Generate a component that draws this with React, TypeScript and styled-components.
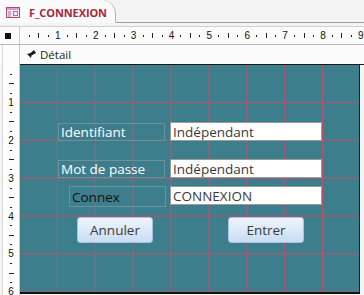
import React from 'react'
import styled, { createGlobalStyle } from 'styled-components';

const CM = 37.9;
const STEP = CM / 4;

const GlobalStyle = createGlobalStyle`
  html, body {
    margin: 0;
    padding: 0;
    background: #f4f4f4;
  }
  body {
    font-family: "Open Sans", "Noto Sans", sans-serif;
  }
`;

type Control = {
  kind: 'label' | 'text';
  text: string;
  left: number;
  top: number;
  width: number;
  height: number;
  dark?: boolean;
};

const controls: Control[] = [
  { kind: 'label', text: 'Identifiant', left: 38, top: 58, width: 107, height: 18 },
  { kind: 'text', text: 'Indépendant', left: 150, top: 57, width: 152, height: 19 },
  { kind: 'label', text: 'Mot de passe', left: 38, top: 95, width: 107, height: 18 },
  { kind: 'text', text: 'Indépendant', left: 150, top: 94, width: 152, height: 19 },
  { kind: 'label', text: 'Connex', left: 49, top: 121, width: 97, height: 21, dark: true },
  { kind: 'text', text: 'CONNEXION', left: 150, top: 121, width: 152, height: 19 },
];

const buttons = [
  { text: 'Annuler', left: 57, top: 152 },
  { text: 'Entrer', left: 208, top: 152 },
];

function tickFor(k: number, vertical: boolean) {
  if (k % 4 === 0) return <RulerNum>{k / 4}</RulerNum>;
  if (k % 4 === 2) return <Bar $vertical={vertical} />;
  return <Dot $vertical={vertical} />;
}

function FormIcon() {
  return (
    <svg width="14" height="11" viewBox="0 0 14 11">
      <rect x="0.5" y="0.5" width="13" height="10" fill="#f6e9f0" stroke="#b24a78" />
      <rect x="1" y="1" width="12" height="2" fill="#d9a0bb" />
      <line x1="2" y1="5" x2="5" y2="5" stroke="#9a7aa8" />
      <line x1="2" y1="7" x2="5" y2="7" stroke="#9a7aa8" />
      <line x1="2" y1="9" x2="5" y2="9" stroke="#9a7aa8" />
      <rect x="7.5" y="4.5" width="4" height="4" fill="none" stroke="#9a7aa8" />
    </svg>
  );
}

// section marker: a bold arrow leaning down-left
function SectionIcon() {
  return (
    <svg width="9" height="9" viewBox="0 0 9 9">
      <path d="M0 4 L4 8 L4.5 5.5 L9 3 L7 0 L3.5 3 Z" fill="#1c1c1c" />
    </svg>
  );
}

function App() {
  const hTicks = Array.from({ length: 37 }, (_, i) => i + 1);
  const vTicks = Array.from({ length: 24 }, (_, i) => i + 1);

  return (
    <Window>
      <GlobalStyle />
      <TabStrip>
        <Tab>
          <FormIcon />
          <TabTitle>F_CONNEXION</TabTitle>
        </Tab>
      </TabStrip>

      <RulerRow>
        <Corner>
          <Square />
        </Corner>
        <HRuler>
          {hTicks.map((k) => (
            <HCell key={k}>{tickFor(k, false)}</HCell>
          ))}
        </HRuler>
      </RulerRow>

      <SectionRow>
        <SideBox />
        <SectionHeader>
          <SectionIcon />
          <span>Détail</span>
        </SectionHeader>
      </SectionRow>

      <BodyRow>
        <VRuler>
          {vTicks.map((k) => (
            <VCell key={k}>{tickFor(k, true)}</VCell>
          ))}
        </VRuler>
        <CanvasWrap>
          <Canvas>
            {controls.map((c, i) =>
              c.kind === 'label' ? (
                <LabelBox
                  key={i}
                  $dark={c.dark}
                  style={{ left: c.left, top: c.top, width: c.width, height: c.height }}
                >
                  {c.text}
                </LabelBox>
              ) : (
                <TextBox
                  key={i}
                  style={{ left: c.left, top: c.top, width: c.width, height: c.height }}
                >
                  {c.text}
                </TextBox>
              )
            )}
            {buttons.map((b) => (
              <Button key={b.text} style={{ left: b.left, top: b.top }}>
                {b.text}
              </Button>
            ))}
          </Canvas>
        </CanvasWrap>
      </BodyRow>
    </Window>
  );
}

export default App

const Window = styled.div`
  width: 364px;
  height: 295px;
  overflow: hidden;
  display: flex;
  flex-direction: column;
  background: #f4f4f4;
`;

const TabStrip = styled.div`
  height: 23px;
  flex: none;
  display: flex;
  align-items: flex-end;
  border-bottom: 1px solid #9c9c9c;
  box-sizing: border-box;
  background: #f4f4f4;
`;

const Tab = styled.div`
  height: 23px;
  box-sizing: border-box;
  margin-bottom: -1px;
  width: 116px;
  display: flex;
  align-items: center;
  gap: 9px;
  padding: 2px 0 0 6px;
  background: #fafafa;
  border: 1px solid #b4b4b4;
  border-bottom: 1px solid #fafafa;
  border-left: none;
  border-top: none;
  border-radius: 0 14px 0 0;
`;

const TabTitle = styled.span`
  font-size: 11px;
  font-weight: 700;
  color: #a3283a;
  letter-spacing: -0.1px;
  white-space: nowrap;
`;

const RulerRow = styled.div`
  flex: none;
  height: 19px;
  box-sizing: border-box;
  margin-top: 3px;
  display: grid;
  grid-template-columns: 20px 1fr;
  border-top: 1px solid #d0d0d0;
  border-bottom: 1px solid #b8b8b8;
  background: #fbfbfb;
`;

const Corner = styled.div`
  display: flex;
  align-items: center;
  justify-content: flex-start;
  padding-left: 5px;
  border-right: 1px solid #c8c8c8;
`;

const Square = styled.div`
  width: 6px;
  height: 6px;
  background: #111;
`;

const HRuler = styled.div`
  display: flex;
  align-items: center;
  padding-left: ${STEP / 2}px;
  overflow: hidden;
`;

const HCell = styled.div`
  flex: none;
  width: ${STEP}px;
  display: flex;
  justify-content: center;
  align-items: center;
`;

const VRuler = styled.div`
  display: flex;
  flex-direction: column;
  padding-top: ${STEP / 2}px;
  background: #fdfdfd;
  border-left: 1px solid #d8d8d8;
  border-right: 1px solid #c8c8c8;
  overflow: hidden;
  margin-left: 2px;
`;

const VCell = styled.div`
  flex: none;
  height: ${STEP}px;
  display: flex;
  justify-content: center;
  align-items: center;
`;

const RulerNum = styled.span`
  font-family: "Liberation Sans", Arial, sans-serif;
  font-size: 10px;
  line-height: 10px;
  color: #111;
`;

const Dot = styled.span<{ $vertical: boolean }>`
  display: block;
  width: ${(p) => (p.$vertical ? 2 : 1)}px;
  height: ${(p) => (p.$vertical ? 1 : 2)}px;
  background: #222;
`;

const Bar = styled.span<{ $vertical: boolean }>`
  display: block;
  width: ${(p) => (p.$vertical ? 5 : 1)}px;
  height: ${(p) => (p.$vertical ? 1 : 5)}px;
  background: #222;
`;

const SectionRow = styled.div`
  flex: none;
  height: 20px;
  display: grid;
  grid-template-columns: 20px 1fr;
  background: #fbfbfb;
`;

const SideBox = styled.div`
  margin-left: 2px;
  border-left: 1px solid #d8d8d8;
  border-right: 1px solid #c8c8c8;
  background: #fdfdfd;
`;

const SectionHeader = styled.div`
  display: flex;
  align-items: center;
  gap: 4px;
  padding-left: 7px;
  font-family: "Open Sans", "Noto Sans", sans-serif;
  font-size: 11.5px;
  color: #222;
  box-sizing: border-box;
  border-bottom: 1px solid #1a1a1a;
`;

const BodyRow = styled.div`
  flex: 1;
  display: grid;
  grid-template-columns: 20px 1fr;
  min-height: 0;
`;

const CanvasWrap = styled.div`
  padding-right: 4px;
  background: #f4f4f4;
`;

const Canvas = styled.div`
  position: relative;
  height: 229px;
  box-sizing: border-box;
  border-right: 1px solid #222;
  border-bottom: 2px solid #111;
  background-color: #3d7e8d;
  background-image:
    linear-gradient(to right, transparent ${CM - 1}px, rgba(232, 64, 96, 0.75) ${CM - 1}px),
    linear-gradient(to bottom, transparent ${CM - 1}px, rgba(232, 64, 96, 0.75) ${CM - 1}px);
  background-size: ${CM}px ${CM}px;
  font-family: "Open Sans", "Noto Sans", sans-serif;
`;

const LabelBox = styled.div<{ $dark?: boolean }>`
  position: absolute;
  box-sizing: border-box;
  display: flex;
  align-items: center;
  padding-left: 2px;
  border: 1px solid #6b9298;
  font-size: 13.5px;
  color: ${(p) => (p.$dark ? '#101010' : '#ffffff')};
  white-space: nowrap;
`;

const TextBox = styled.div`
  position: absolute;
  box-sizing: border-box;
  display: flex;
  align-items: center;
  padding-left: 2px;
  background: #ffffff;
  border: 1px solid #9a9a9a;
  font-size: 13.5px;
  color: #3a3a3a;
  white-space: nowrap;
`;

const Button = styled.div`
  position: absolute;
  box-sizing: border-box;
  width: 76px;
  height: 26px;
  display: flex;
  align-items: center;
  justify-content: center;
  border: 1px solid #a7c3df;
  border-radius: 3px;
  background: linear-gradient(to bottom, #eef5fd 0%, #dbe9f8 50%, #c9dcf2 100%);
  font-size: 13.5px;
  color: #3a3a3a;
`;
